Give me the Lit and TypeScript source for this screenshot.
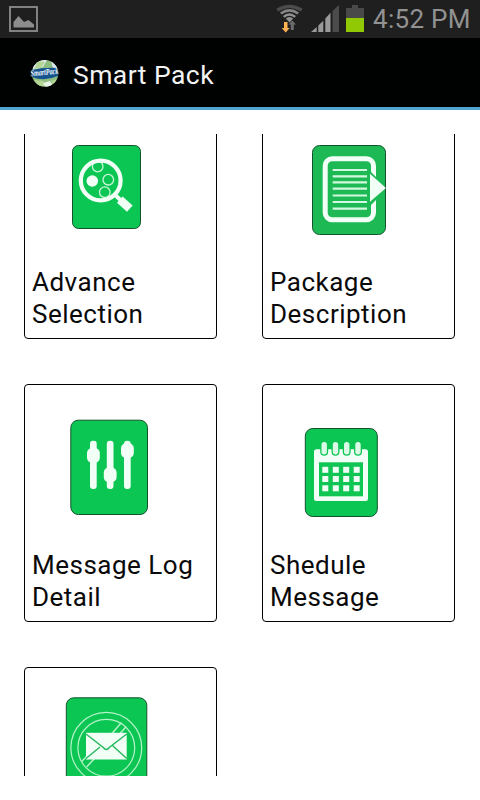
import { LitElement, html, css, svg } from "lit";
import { customElement } from "lit/decorators.js";

const search = svg`
  <rect class="tile" x="72.5" y="145.5" width="68" height="83" rx="6"/>
  <clipPath id="lens"><circle cx="100.7" cy="180" r="19"/></clipPath>
  <g clip-path="url(#lens)" fill="none" stroke="#c9f7d9" stroke-width="1.3">
    <circle cx="97.7" cy="166.5" r="5.3"/><circle cx="108.3" cy="179.7" r="5.3"/><circle cx="104.8" cy="192.2" r="5.3"/>
  </g>
  <circle cx="92.3" cy="181" r="5.8" fill="#f2fff6"/>
  <circle cx="100.7" cy="180.5" r="19.9" fill="none" stroke="#f2fff6" stroke-width="4.2"/>
  <path d="M113.5 193.5l7 6.5" stroke="#f2fff6" stroke-width="4"/>
  <path d="M119.8 199.6L129.8 208.6" stroke="#f2fff6" stroke-width="8.4"/>`;

const pack = svg`
  <rect class="tile alt" x="312.5" y="145.5" width="73" height="89" rx="7"/>
  <rect x="325.2" y="158.7" width="48.3" height="61" rx="7" fill="none" stroke="#f2fff6" stroke-width="5"/>
  <path d="M368 169L384 185V192L368 208Z" fill="#1db954"/>
  <path d="M370 173.8L386 188L370 201.8Z" fill="#f2fff6"/>
  <path d="M332.7 170H367M332.7 176.3H367M332.7 182.4H367M332.7 188.7H367M332.7 195.5H367M332.7 202H367M332.7 208.6H367" stroke="#d2f9df" stroke-width="2.2"/>`;

const sliders = svg`
  <rect class="tile" x="70.8" y="420.2" width="76.7" height="94.3" rx="7.5"/>
  <g fill="#f2fff6">
    <rect x="90" y="440.7" width="6.7" height="48.3" rx="3"/><rect x="106.8" y="440.7" width="6.7" height="48.3" rx="3"/><rect x="124" y="440.7" width="6.7" height="48.3" rx="3"/>
    <rect x="87" y="448" width="12.8" height="14.7" rx="5"/><rect x="103.8" y="467.6" width="12.8" height="14.7" rx="5"/><rect x="121" y="443.3" width="12.8" height="14.7" rx="5"/>
  </g>`;

const xs = [322.3, 332.8, 343.2, 353.7];
const calendar = svg`
  <rect class="tile" x="305.3" y="428.5" width="72" height="88" rx="7.5"/>
  <rect x="314" y="449.2" width="54" height="51.8" rx="2.5" fill="#f2fff6"/>
  <rect x="319" y="462.3" width="44" height="34" fill="#0fc553"/>
  ${[466.8, 476, 485.3].map(y => xs.map(x => svg`<rect x=${x} y=${y} width="6" height="6" fill="#f2fff6"/>`))}
  ${[324.2, 335.5, 346.7, 358].map(x => svg`
    <path d="M${x - 4} 449v2.8a4 4 0 0 0 8 0V449z" fill="#0fc553"/>
    <rect x=${x - 2.7} y="442" width="5.4" height="12.4" rx="2.7" fill="#dcfbe6"/>`)}`;

const mail = svg`
  <rect class="tile" x="66.3" y="697.8" width="80.5" height="96" rx="7.5"/>
  <g fill="none" stroke="#b3f3c9" stroke-width="1.2">
    <circle cx="106.3" cy="747.8" r="35.4"/><circle cx="106.3" cy="747.8" r="28.4"/>
    <path d="M111.5 734L121.5 722.5M119.5 734L126.3 726.5M81.6 761.5L89.5 753.5M86.6 767L95 758" stroke-width="1.5"/>
  </g>
  <rect x="86" y="732.8" width="40.7" height="26.7" fill="#f2fff6"/>
  <path d="M86 734L103.3 747.5Q106.3 751.5 109.3 747.5L126.7 734M86 758.5L100 747M126.7 758.5L112.5 745.5" fill="none" stroke="#28b960" stroke-width="1.5"/>`;

const cards = [
  { label: "Advance Selection", art: search, x: 24, y: 101 },
  { label: "Package Description", art: pack, x: 262, y: 101 },
  { label: "Message Log Detail", art: sliders, x: 24, y: 384 },
  { label: "Shedule Message", art: calendar, x: 262, y: 384 },
  { label: "", art: mail, x: 24, y: 667 },
];

@customElement("app-root")
export class AppRoot extends LitElement {
  static styles = css`
    :host { display: flex; flex-direction: column; height: 800px; background: #fff; font-family: Roboto, sans-serif; overflow: hidden; }
    svg { display: block; flex: none; }
    .status { height: 38px; flex: none; background: #1f1f1f; display: flex; align-items: center; justify-content: space-between; padding-right: 10px; }
    .right { display: flex; align-items: center; }
    .time { color: #929292; font-size: 26px; line-height: 38px; width: 97px; white-space: nowrap; letter-spacing: 0.3px; }
    .bar { height: 69px; flex: none; background: #000202; border-bottom: 3px solid #50a4d0; display: flex; align-items: center; color: #f3f3f3; padding-left: 24px; }
    .title { margin-left: 7px; font-size: 26.5px; line-height: 32px; padding-top: 4px; letter-spacing: 0.45px; }
    .scroll { margin-top: 24px; height: 642px; overflow: hidden; padding: 0 24px; }
    .grid { margin-top: -33px; display: grid; grid-template-columns: 193px 193px; grid-auto-rows: 238px; gap: 45px; }
    .card { box-sizing: border-box; border: 1px solid #000; border-radius: 4px; }
    .label { padding: 0 7px; font-size: 26px; line-height: 32px; color: #0a0a0a; letter-spacing: 0.5px; }
    .tile { fill: #0bc653; stroke: #14522c; stroke-width: 1; }
    .alt { fill: #1db954; }
    .globe { overflow: visible; }
    .logo { font: italic bold 9px "Liberation Serif", serif; }
  `;

  render() {
    return html`
      <div class="status">
        <svg width="44" height="38" viewBox="0 0 44 38">
          <rect x="10" y="7" width="27" height="24" fill="none" stroke="#8d8d8d" stroke-width="1.8"/>
          <path d="M13.5 27.5V22L18.5 16L24 22L28.5 20L34 24.5V27.5Z" fill="#8d8d8d"/>
        </svg>
        <div class="right">
          <svg width="98" height="38" viewBox="275 0 98 38">
            <g fill="none" stroke-width="2.7">
              <path d="M277.3 10.2Q289.3 2.5 301.7 10.2" stroke="#4c4c4c" stroke-width="3.2"/>
              <path d="M280.8 13.5Q289.3 7.2 298.2 13.5" stroke="#858585"/>
              <path d="M283.7 16.9Q289.3 12.1 295.2 16.9" stroke="#929292" stroke-width="2.5"/>
            </g>
            <path d="M285.8 18.5Q289.3 15.5 293.2 18.5L289.5 22.5Z" fill="#929292"/>
            <path d="M284 22h3.5v6h2.2l-4 4.5l-4-4.5h2.3z" fill="#ffb154"/>
            <path d="M290.8 30h3v-5.5h2.2L292.3 20.5L288.6 24.5h2.2z" fill="#6c6c6c"/>
            <path d="M311 32L316.7 27V32ZM318.3 25.6L323.3 20.8V32H318.3ZM325.3 18.5L330.5 12.8V32H325.3Z" fill="#999"/>
            <path d="M332.5 11L339 5V32H332.5Z" fill="#4b4b4b"/>
            <path d="M352 5h6v3h6v10H346V8h6z" fill="#494949"/>
            <rect x="346" y="18" width="18" height="14" fill="#91ca05"/>
          </svg>
          <div class="time">4:52 PM</div>
        </div>
      </div>
      <div class="bar">
        <svg class="globe" width="42" height="40" viewBox="24 52 42 40">
          <clipPath id="globe"><circle cx="45" cy="72.3" r="13.3"/></clipPath>
          <g clip-path="url(#globe)">
            <rect x="30" y="57" width="32" height="30" fill="#8fbd80"/>
            <path d="M33 65Q38 57 47 59L43 66L33 70ZM51 60L60 68L53 67Z" fill="#dce9f2"/>
            <path d="M38 60l7 1-4 6-7 1zM34 79l9 1 4 6-9-1zM51 80l7-2-4 7z" fill="#b4d695"/>
            <path d="M43 82l7-2 3 5-7 2z" fill="#e7f2e7"/>
            <path d="M31 69Q45 66 59 67L58 75Q44 81 32 76Z" fill="#14538d"/>
          </g>
          <text class="logo" x="30.5" y="74" textLength="28" lengthAdjust="spacingAndGlyphs" fill="#f4fbff" transform="rotate(-5 45 72)">SmartPack</text>
        </svg>
        <div class="title">Smart Pack</div>
      </div>
      <div class="scroll">
        <div class="grid">
          ${cards.map(c => html`
            <div class="card">
              <svg width="191" height="164" viewBox="${c.x + 1} ${c.y + 1} 191 164">${c.art}</svg>
              <div class="label">${c.label}</div>
            </div>`)}
        </div>
      </div>`;
  }
}
